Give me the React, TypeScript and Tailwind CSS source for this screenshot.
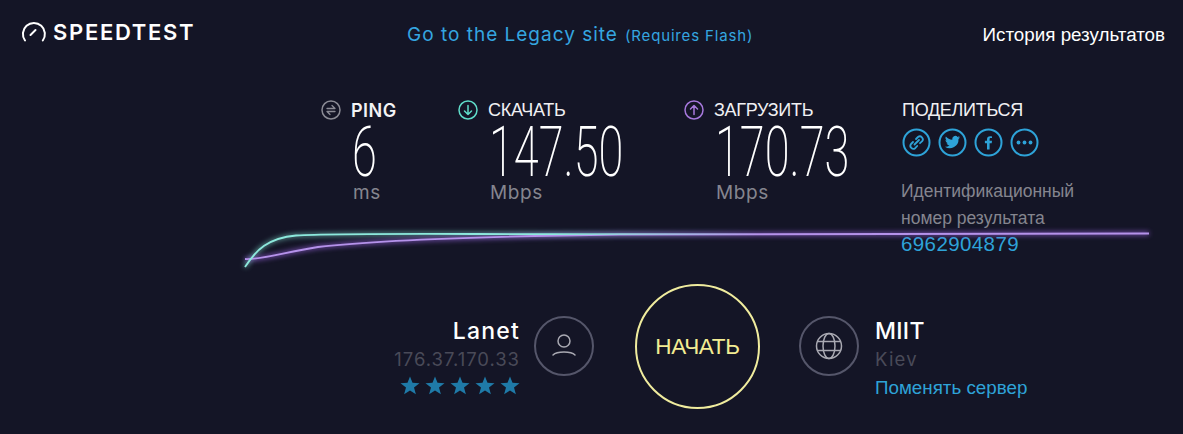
import React from "react";

const gotham = "font-['Inter',sans-serif]";
const arial = "font-['Liberation_Sans',sans-serif]";

function Circle({ color, children }: { color: string; children: React.ReactNode }) {
  return (
    <svg width="20" height="20" viewBox="0 0 20 20" fill="none" stroke={color} strokeWidth="1.5" strokeLinecap="round" strokeLinejoin="round" className="shrink-0">
      <circle cx="10" cy="10" r="9" />
      {children}
    </svg>
  );
}

function Metric({ label, icon, value, unit, className, labelClass }: { label: string; icon: React.ReactNode; value: string; unit: string; className: string; labelClass?: string }) {
  return (
    <div className={className}>
      <div className="flex items-center gap-[10px] h-[20px]">
        {icon}
        <span className={labelClass}>{label}</span>
      </div>
      <div className="h-[60px] pl-[31px] mt-[2px]">
        <div className="origin-left scale-x-[0.645] font-['Roboto',sans-serif] font-extralight text-[70px] leading-[60px] text-white whitespace-nowrap">{value}</div>
      </div>
      <div className={`${gotham} pl-[32px] text-[19px] leading-[21px] tracking-[0.6px] text-[#85858f]`}>{unit}</div>
    </div>
  );
}

function ShareIcon({ children }: { children: React.ReactNode }) {
  return (
    <svg width="29" height="29" viewBox="0 0 29 29" fill="none" stroke="#2ea3d8" strokeWidth="2" strokeLinecap="round" strokeLinejoin="round">
      <circle cx="14.5" cy="14.5" r="13" />
      {children}
    </svg>
  );
}

export default function App() {
  return (
    <div className="relative w-[1183px] h-[434px] overflow-hidden bg-[#141526] text-white">
      <header className="relative h-[70px]">
        <div className="flex items-center pl-[21px] pt-[20px]">
          <svg width="26" height="22" viewBox="0 0 26 22" fill="none" stroke="#fff" strokeWidth="2" strokeLinecap="round" className="mr-[6px]">
            <path d="M4 19.5 A11 11 0 1 1 21.8 19.5" />
            <path d="M9.5 14 L14.5 9" />
          </svg>
          <span className={`${gotham} font-semibold text-[22px] leading-[24px] tracking-[1.7px]`}>SPEEDTEST</span>
        </div>
        <div className="absolute left-[407px] top-[23px] flex items-baseline gap-[7px]">
          <span className={`${gotham} text-[#35a6e0] text-[19px] leading-[24px] tracking-[1px]`}>Go to the Legacy site</span>
          <span className={`${gotham} text-[#35a6e0] text-[15px] leading-[24px] tracking-[0.85px]`}>(Requires Flash)</span>
        </div>
        <div className={`${arial} absolute right-[18px] top-[24px] text-[18.8px] leading-[22px]`}>История результатов</div>
      </header>

      <main className="flex pl-[321px] pt-[30px]">
        <Metric
          className="w-[137px]"
          label="PING"
          labelClass={`${gotham} font-semibold text-[18px] tracking-[0.5px] text-[#f3f3f5]`}
          value="6"
          unit="ms"
          icon={
            <Circle color="#8b8b95">
              <path d="M6 8.5 H14 L11 5.5 M14 11.5 H6 L9 14.5" strokeWidth="1.3" />
            </Circle>
          }
        />
        <Metric
          className="w-[226px]"
          label="СКАЧАТЬ"
          labelClass={`${arial} text-[18px] tracking-[-0.3px] text-[#f0f0f3]`}
          value="147.50"
          unit="Mbps"
          icon={
            <Circle color="#5fdcc9">
              <path d="M10 5.5 V14.5 M6.5 11 L10 14.5 L13.5 11" />
            </Circle>
          }
        />
        <Metric
          className="w-[218px]"
          label="ЗАГРУЗИТЬ"
          labelClass={`${arial} text-[18px] tracking-[-0.3px] text-[#f0f0f3]`}
          value="170.73"
          unit="Mbps"
          icon={
            <Circle color="#a678dc">
              <path d="M10 14.5 V5.5 M6.5 9 L10 5.5 L13.5 9" />
            </Circle>
          }
        />
        <div className="w-[190px]">
          <div className={`${arial} h-[20px] leading-[20px] text-[18px] tracking-[-0.3px] text-[#f0f0f3]`}>ПОДЕЛИТЬСЯ</div>
          <div className="flex gap-[7px] mt-[8px]">
            <ShareIcon>
              <path d="M12.5 16.5 L17 12 M11 14 L9 16 a3 3 0 0 0 4.2 4.2 L15.2 18 M14 11 L16 9 a3 3 0 0 1 4.2 4.2 L18 15.2" strokeWidth="1.8" />
            </ShareIcon>
            <ShareIcon>
              <path stroke="none" fill="#2ea3d8" d="M22 9.3c-.6.3-1.2.4-1.8.5.6-.4 1.1-1 1.4-1.7-.6.4-1.3.6-2 .8a3.1 3.1 0 0 0-5.3 2.8c-2.6-.1-4.9-1.4-6.4-3.3-.8 1.4-.4 3.2 1 4.1-.5 0-1-.1-1.4-.4 0 1.5 1.1 2.8 2.5 3.1-.5.1-1 .1-1.4 0 .4 1.2 1.5 2.1 2.9 2.2A6.3 6.3 0 0 1 6.9 18.7a8.8 8.8 0 0 0 13.6-7.8c.6-.4 1.1-1 1.5-1.6z" />
            </ShareIcon>
            <ShareIcon>
              <path stroke="none" fill="#2ea3d8" d="M15.6 21.5v-6.2h2.1l.3-2.5h-2.4v-1.5c0-.7.2-1.2 1.2-1.2H18V8.4c-.3 0-1-.1-1.9-.1-1.9 0-3.1 1.1-3.1 3.2v1.3h-2.1v2.5H13v6.2z" />
            </ShareIcon>
            <ShareIcon>
              <circle cx="8.5" cy="14.5" r="1.9" fill="#2ea3d8" stroke="none" />
              <circle cx="14.5" cy="14.5" r="1.9" fill="#2ea3d8" stroke="none" />
              <circle cx="20.5" cy="14.5" r="1.9" fill="#2ea3d8" stroke="none" />
            </ShareIcon>
          </div>
          <div className={`${arial} mt-[21px] text-[17.5px] leading-[26.5px] text-[#85858f] -ml-[1px]`}>
            Идентификационный
            <br />
            номер результата
            <br />
            <span className="text-[#2ea3d8] text-[20.5px] tracking-[0.4px]">6962904879</span>
          </div>
        </div>
      </main>

      <svg className="absolute left-0 top-0 pointer-events-none" width="1183" height="434" viewBox="0 0 1183 434" fill="none">
        <defs>
          <filter id="glow" x="-5%" y="-200%" width="110%" height="500%">
            <feGaussianBlur stdDeviation="2.5" />
          </filter>
          <linearGradient id="teal" gradientUnits="userSpaceOnUse" x1="245" y1="0" x2="760" y2="0">
            <stop offset="0" stopColor="#8ce9dc" />
            <stop offset="0.6" stopColor="#8ce9dc" />
            <stop offset="1" stopColor="#8ce9dc" stopOpacity="0" />
          </linearGradient>
        </defs>
        <path d="M245 267 C256 250 268 238 296 235.5 C340 233 420 234 560 234.2 L760 234" stroke="url(#teal)" strokeWidth="3.5" opacity="0.6" filter="url(#glow)" />
        <path d="M245 259 C262 260 285 252 318 247 C370 241 470 236.5 620 234.5 L1149 233.5" stroke="#9a63e0" strokeWidth="3.5" opacity="0.75" filter="url(#glow)" />
        <path d="M245 259 C262 260 285 252 318 247 C370 241 470 236.5 620 234.5 L1149 233.5" stroke="#b592ea" strokeWidth="1.8" />
        <path d="M245 267 C256 250 268 238 296 235.5 C340 233 420 234 560 234.2 L760 234" stroke="url(#teal)" strokeWidth="1.8" />
      </svg>

      <section className="absolute left-0 top-[284px] w-full flex">
        <div className="w-[520px] pt-[33px] text-right shrink-0">
          <div className={`${gotham} font-medium text-[23px] leading-[28px] tracking-[1.2px]`}>Lanet</div>
          <div className={`${gotham} text-[18.5px] leading-[24px] tracking-[0.95px] text-[#494a58] mt-[2px]`}>176.37.170.33</div>
          <div className="flex justify-end gap-[5px] mt-[5px] text-[#1f7aa8]">
            {[0, 1, 2, 3, 4].map((i) => (
              <svg key={i} width="20" height="19" viewBox="0 0 20 19" fill="currentColor">
                <path d="M10 0.5 L12.5 6.8 L19.5 7.2 L14 11.5 L15.9 18.3 L10 14.5 L4.1 18.3 L6 11.5 L0.5 7.2 L7.5 6.8 Z" />
              </svg>
            ))}
          </div>
        </div>
        <div className="ml-[14px] mt-[32px] w-[60px] h-[60px] rounded-full border-[2px] border-[#55566a] flex items-center justify-center shrink-0">
          <svg width="28" height="28" viewBox="0 0 28 28" fill="none" stroke="#a9a9b2" strokeWidth="1.5" strokeLinecap="round">
            <circle cx="14" cy="9" r="6" />
            <path d="M3 23 C7 19 21 19 25 23" />
          </svg>
        </div>
        <div className={`${arial} ml-[41px] w-[125px] h-[125px] rounded-full border-[2px] border-[#f0ec9e] flex items-center justify-center text-[22.5px] tracking-[-0.3px] text-[#f2ec93] shrink-0`}>
          НАЧАТЬ
        </div>
        <div className="ml-[39px] mt-[32px] w-[60px] h-[60px] rounded-full border-[2px] border-[#55566a] flex items-center justify-center shrink-0">
          <svg width="30" height="30" viewBox="0 0 30 30" fill="none" stroke="#a9a9b2" strokeWidth="1.5">
            <circle cx="15" cy="15" r="12.5" />
            <ellipse cx="15" cy="15" rx="6" ry="12.5" />
            <path d="M3.5 10.5 H26.5 M3.5 19.5 H26.5" />
          </svg>
        </div>
        <div className="ml-[16px] pt-[33px]">
          <div className={`${gotham} font-medium text-[23px] leading-[28px] tracking-[0.3px]`}>MIIT</div>
          <div className={`${gotham} text-[18.5px] leading-[24px] tracking-[1.2px] text-[#494a58] mt-[2px]`}>Kiev</div>
          <div className={`${arial} text-[18.8px] leading-[22px] text-[#2ea3d8] mt-[6px]`}>Поменять сервер</div>
        </div>
      </section>
    </div>
  );
}
